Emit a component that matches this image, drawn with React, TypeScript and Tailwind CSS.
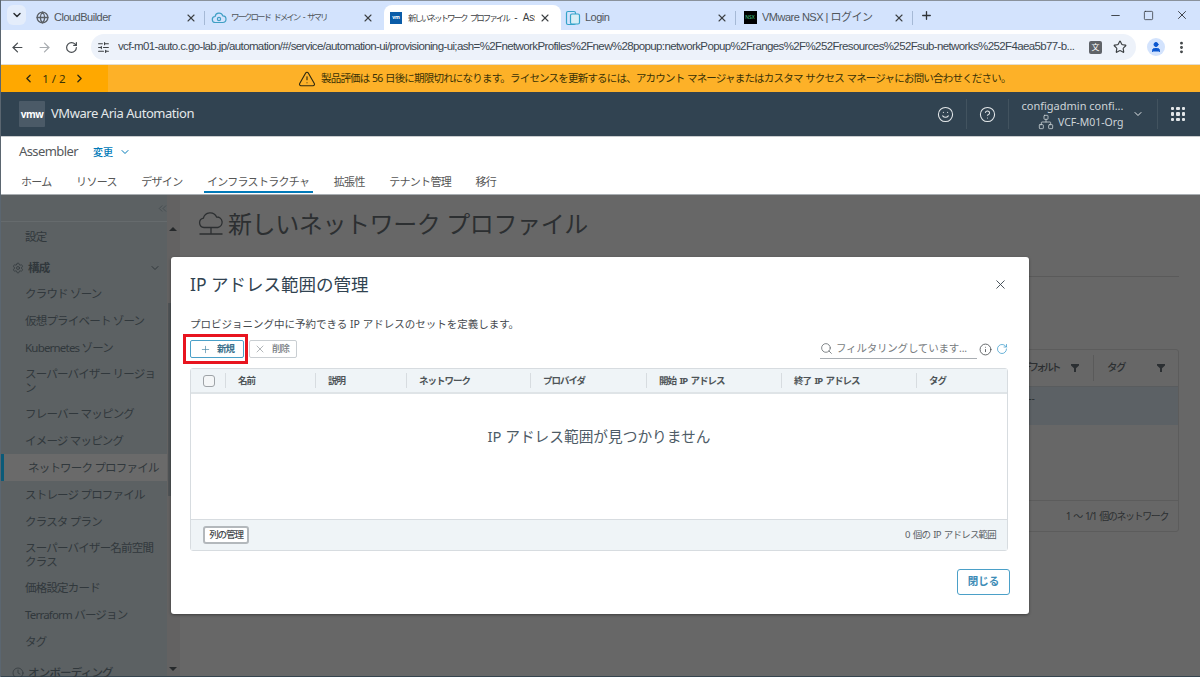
import {
  ArrowLeft, ArrowRight, ChevronDown, ChevronLeft, ChevronRight, ChevronsLeft, CircleHelp, Clock, EllipsisVertical,
  Globe, Info, Minus, Network, Plus, RotateCw, Search, Settings, SlidersHorizontal, Smile, Square, Star, TriangleAlert, User, X,
} from 'lucide-react';

const font = 'font-["Noto_Sans","Noto_Sans_CJK_JP",sans-serif]';

function CloudFav() {
  return (
    <svg width="16" height="16" viewBox="0 0 16 16" fill="none" stroke="#3f9fc4" strokeWidth="1.2">
      <path d="M4.5 12.5a3 3 0 0 1-.4-6A4 4 0 0 1 11.8 5.800a3.300 3.300 0 0 1-.3 6.700z" />
      <circle cx="8" cy="9" r="1.600" />
    </svg>
  );
}

function LoginFav() {
  return (
    <svg width="16" height="16" viewBox="0 0 16 16" fill="none" stroke="#35a3c9" strokeWidth="1.2">
      <rect x="1.500" y="1.500" width="9" height="13" rx="1.500" />
      <rect x="5.500" y="4" width="9" height="10" rx="1.500" fill="#d7eef6" />
    </svg>
  );
}

function CloudNet() {
  return (
    <svg width="26" height="24" viewBox="0 0 26 24" fill="none" stroke="#2c2f31" strokeWidth="1.300" className="shrink-0">
      <path d="M6 15.500a4.700 4.700 0 0 1-.6-9.300A7 7 0 0 1 18.600 5a5.300 5.300 0 0 1 1.200 10.500z" />
      <path d="M13 15.500v6M1.500 22h23" />
    </svg>
  );
}

function Tab({ icon, title, active, sep, cjk }: { icon: React.ReactNode; title: React.ReactNode; active?: boolean; sep?: boolean; cjk?: boolean }) {
  return (
    <div className={`relative flex h-[25px] w-[177px] shrink-0 items-center pl-[3px] pr-[10px] ${active ? 'rounded-t-[8px] bg-white' : ''}`}>
      <span className="flex w-[16px] shrink-0 items-center justify-center ml-[1px]">{icon}</span>
      <span
        className={`ml-[4px] flex-1 overflow-hidden whitespace-pre font-["Liberation_Sans","Noto_Sans_CJK_JP",sans-serif] ${
          cjk ? 'text-[8.500px] tracking-[-2px] [word-spacing:3px]' : 'text-[11px] tracking-[-0.500px]'
        } ${active ? 'text-[#3c4043]' : 'text-[#50565c]'}`}
      >
        {title}
      </span>
      <X size={12} strokeWidth={2.2} className="ml-1 shrink-0 text-[#3c4043]" />
      {sep && <span className="absolute right-[2px] top-[6px] h-[14px] w-px bg-[#a5b9d6]" />}
    </div>
  );
}

const sideItems = [
  { t: 'クラウド ゾーン' },
  { t: '仮想プライベート ゾーン' },
  { t: 'Kubernetes ゾーン' },
  { t: 'スーパーバイザー リージョン', two: true },
  { t: 'フレーバー マッピング' },
  { t: 'イメージ マッピング' },
  { t: 'ネットワーク プロファイル', active: true },
  { t: 'ストレージ プロファイル' },
  { t: 'クラスタ プラン' },
  { t: 'スーパーバイザー名前空間クラス', two: true },
  { t: '価格設定カード' },
  { t: 'Terraform バージョン' },
  { t: 'タグ' },
];

const navTabs = ['ホーム', 'リソース', 'デザイン', 'インフラストラクチャ', '拡張性', 'テナント管理', '移行'];
const columns = ['名前', '説明', 'ネットワーク', 'プロバイダ', '開始 IP アドレス', '終了 IP アドレス', 'タグ'];

function Funnel() {
  return (
    <svg width="8" height="8" viewBox="0 0 8 8" fill="#2b2f32">
      <path d="M0 0h8v1.500L5 4.200V8H3V4.200L0 1.500z" />
    </svg>
  );
}

function AppsDots() {
  return (
    <div className="grid grid-cols-3 gap-[2px]">
      {Array.from({ length: 9 }).map((_, i) => (
        <span key={i} className="h-[3.500px] w-[3.500px] rounded-[1px] bg-[#e3e7ea]" />
      ))}
    </div>
  );
}

export default function App() {
  return (
    <div className={`${font} flex h-[677px] w-[1200px] flex-col overflow-hidden border-l border-[#5b6670] bg-white`}>
      {/* tab strip */}
      <div className="flex h-[30px] shrink-0 items-end border-t border-[#8a929c] bg-[#d3e3fd]">
        <div className="mb-[5px] ml-[6px] flex h-[20px] w-[19px] items-center justify-center rounded-[6px] bg-[#e4edfb]">
          <ChevronDown size={12} strokeWidth={3} className="text-[#2b2f33]" />
        </div>
        <div className="ml-[4px] flex">
          <Tab icon={<Globe size={13} strokeWidth={2.4} className="text-[#5b6066]" />} title="CloudBuilder" sep />
          <Tab icon={<CloudFav />} title="ワークロード ドメイン - サマリ" cjk />
          <Tab
            active
            cjk
            icon={<span className="flex h-[12px] w-[12px] items-center justify-center bg-[#0a5ca8] text-[5px] font-bold text-white">vm</span>}
            title={
              <>
                新しいネットワーク プロファイル<span className="text-[10px] tracking-[-0.3px]"> - Assembler</span>
              </>
            }
          />
          <Tab icon={<LoginFav />} title="Login" sep />
          <Tab
            icon={<span className="flex h-[13px] w-[13px] items-center justify-center bg-black text-[5px] text-[#45d08a]">NSX</span>}
            title="VMware NSX | ログイン"
            sep
          />
        </div>
        <Plus size={13} strokeWidth={2.4} className="mb-[8px] ml-[5px] text-[#2f3337]" />
        <div className="mb-[8px] ml-auto flex items-center gap-[21px] pr-[11px] text-[#2b2f33]">
          <Minus size={13} strokeWidth={1.600} />
          <Square size={11} strokeWidth={1.600} />
          <X size={14} strokeWidth={1.500} />
        </div>
      </div>

      {/* address bar */}
      <div className="flex h-[35px] shrink-0 items-center border-b border-[#e3ddd0] bg-white pl-[9px] pr-[11px]">
        <ArrowLeft size={15} className="text-[#474c50]" />
        <ArrowRight size={15} className="ml-[12px] text-[#a9adb1]" />
        <RotateCw size={13} strokeWidth={2.2} className="ml-[13px] text-[#474c50]" />
        <div className="ml-[13px] flex h-[26px] w-[1046px] items-center rounded-full bg-[#edf2fa] pl-[6px] pr-[9px]">
          <SlidersHorizontal size={13} className="shrink-0 text-[#3c4043]" />
          <span className='ml-[8px] flex-1 overflow-hidden whitespace-nowrap font-["Liberation_Sans",sans-serif] text-[11.500px] tracking-[-0.620px] text-[#3c4750]'>
            vcf-m01-auto.c.go-lab.jp/automation/#/service/automation-ui/provisioning-ui;ash=%2FnetworkProfiles%2Fnew%28popup:networkPopup%2Franges%2F%252Fresources%252Fsub-networks%252F4aea5b77-b...
          </span>
          <span className="ml-[10px] flex h-[13px] w-[13px] shrink-0 items-center justify-center rounded-[2px] bg-[#5f6368] text-[8px] text-white">文</span>
          <Star size={14} strokeWidth={2} className="ml-[11px] shrink-0 text-[#3c4043]" />
        </div>
        <span className="ml-[11px] flex h-[18px] w-[18px] items-center justify-center rounded-full bg-[#d3e3fd]">
          <User size={12} fill="#0b57d0" className="text-[#0b57d0]" />
        </span>
        <EllipsisVertical size={15} strokeWidth={2.6} className="ml-[9px] text-[#3c4043]" />
      </div>

      {/* license banner */}
      <div className="flex h-[27px] shrink-0 items-center bg-[#fdb128] text-[#3a3206]">
        <div className="flex h-full w-[107px] shrink-0 items-center bg-[#ffa800] pl-[21px]">
          <ChevronLeft size={13} strokeWidth={2.4} className="text-[#2f2a10]" />
          <span className="ml-[2px] w-[34px] whitespace-nowrap text-center text-[11.500px]">1 / 2</span>
          <ChevronRight size={13} strokeWidth={2.4} className="ml-[2px] text-[#2f2a10]" />
        </div>
        <div className="ml-[190px] flex items-center">
          <TriangleAlert size={18} strokeWidth={1.500} className="text-[#2f2a10]" />
          <span className="ml-[5px] whitespace-nowrap text-[10.500px] tracking-[-0.800px] [word-spacing:0.6px]">製品評価は 56 日後に期限切れになります。ライセンスを更新するには、アカウント マネージャまたはカスタマ サクセス マネージャにお問い合わせください。</span>
        </div>
      </div>

      {/* app header */}
      <div className="flex h-[45px] shrink-0 items-center border-b border-[#c9ccce] bg-[#314351] pl-[18px] text-[#e4e8ea]">
        <div className="flex h-[26px] w-[26px] items-center justify-center rounded-[1px] bg-[#4b5a67] text-[10px] font-bold tracking-[-0.5px] text-white">vmw</div>
        <span className="ml-[6px] whitespace-nowrap text-[13px] tracking-[-0.450px]">VMware Aria Automation</span>
        <div className="ml-auto flex h-full items-center">
          <Smile size={17} strokeWidth={1.500} />
          <span className="ml-[12px] h-[30px] w-px bg-[#42535f]" />
          <CircleHelp size={17} strokeWidth={1.500} className="ml-[12px]" />
          <span className="ml-[12px] h-[30px] w-px bg-[#42535f]" />
          <div className="ml-[12px] flex w-[103px] flex-col items-end text-[#cdd4d8]">
            <span className="whitespace-nowrap text-[11px] leading-[16px]">configadmin confi...</span>
            <span className="flex items-center whitespace-nowrap text-[10.500px] leading-[16px]">
              <Network size={16} strokeWidth={1.200} className="mr-[4px]" />
              VCF-M01-Org
            </span>
          </div>
          <ChevronDown size={12} className="ml-[8px]" />
          <span className="ml-[13px] h-[30px] w-px bg-[#42535f]" />
          <span className="ml-[13px] mr-[15px]"><AppsDots /></span>
        </div>
      </div>

      {/* product nav */}
      <div className="flex h-[58px] shrink-0 flex-col border-b border-[#a9aeb2] bg-white pl-[18px]">
        <div className="mt-[6px] flex h-[18px] items-center">
          <span className="text-[13px] tracking-[-0.600px] text-[#55595c]">Assembler</span>
          <span className="ml-[15px] text-[10px] font-medium text-[#0079b8]">変更</span>
          <ChevronDown size={12} strokeWidth={2} className="ml-[6px] text-[#0079b8]" />
        </div>
        <div className="mt-[11px] flex gap-[24.500px] pl-[2px]">
          {navTabs.map((t) => (
            <span
              key={t}
              className={`relative whitespace-nowrap text-[11px] leading-[20px] tracking-[-0.700px] text-[#565656] ${
                t === 'インフラストラクチャ' ? 'after:absolute after:-left-[3px] after:-right-[4px] after:top-[19px] after:h-[2px] after:bg-[#0079b8]' : ''
              }`}
            >
              {t}
            </span>
          ))}
        </div>
      </div>

      {/* main area, dimmed by the overlay */}
      <div className="relative flex min-h-0 flex-1 border-b border-[#36454f] bg-[#676767]">
        <aside className="flex w-[166px] shrink-0 flex-col bg-[#5c6163] text-[11.500px] tracking-[-0.800px] text-[#31383c]">
          <div className="flex h-[27px] shrink-0 items-center justify-end border-b border-[#666b6d]">
            <ChevronsLeft size={13} strokeWidth={1.200} className="-mr-[2px] text-[#3d4448]" />
          </div>
          <div className="flex h-[30px] shrink-0 items-center pl-[24px]">設定</div>
          <div className="mt-[3px] flex h-[26px] shrink-0 items-center pl-[11px] font-bold">
            <Settings size={12} strokeWidth={1.500} />
            <span className="ml-[4px]">構成</span>
            <ChevronDown size={12} strokeWidth={2} className="ml-auto mr-[6px]" />
          </div>
          <div className="-mt-[1px] flex flex-col">
            {sideItems.map((s) => (
              <div
                key={s.t}
                className={`flex shrink-0 items-center pl-[24px] pr-[10px] leading-[14px] ${s.two ? 'h-[39px]' : 'h-[27px] whitespace-nowrap'} ${
                  s.active ? 'border-l-[3px] border-[#0b5a78] bg-[#6a6a6a] pl-[21px]' : ''
                }`}
              >
                {s.t}
              </div>
            ))}
          </div>
          <div className="mt-[9px] flex items-center pl-[11px] font-medium">
            <Clock size={12} strokeWidth={1.500} />
            <span className="ml-[4px] whitespace-nowrap">オンボーディング</span>
          </div>
        </aside>
        <div className="flex w-[13px] shrink-0 bg-[#636262] pl-[1px]">
          <span className="mt-[108px] h-[193px] w-[3px] bg-[#4f5356]" />
          <div className="-ml-[2px] flex w-[7px] flex-col items-center justify-between pb-[5px] pt-[32px]">
            <span className="h-0 w-0 border-x-[4px] border-b-[4px] border-x-transparent border-b-[#26292b]" />
            <span className="h-0 w-0 border-x-[4px] border-t-[4px] border-x-transparent border-t-[#26292b]" />
          </div>
        </div>

        <div className="flex min-w-0 flex-1 flex-col pl-[18px] pr-[21px] text-[#2c2f31]">
          <div className="mt-[16px] flex h-[26px] items-center">
            <CloudNet />
            <span className="ml-[4px] whitespace-nowrap text-[24px] tracking-[-0.400px]">新しいネットワーク プロファイル</span>
          </div>
          <div className="mt-[39px] h-px w-full bg-[#5a5a5a]" />
          <div className="mt-[72px] flex h-[183px] w-full flex-col rounded-[3px] border border-[#5c5c5c] text-[10.500px]">
            <div className="flex h-[37px] shrink-0 items-center justify-end border-b border-[#595c5e]">
              <span className="flex h-[26px] w-[84px] items-center border-r border-[#5a5a5a] pl-[11px] pr-[14px]">
                <span className="flex-1 whitespace-nowrap font-medium tracking-[-3px]">デフォルト</span>
                <Funnel />
              </span>
              <span className="flex w-[84px] items-center pl-[13px] pr-[13px]">
                <span className="flex-1 font-medium tracking-[-1.500px]">タグ</span>
                <Funnel />
              </span>
            </div>
            <div className="flex h-[38px] shrink-0 items-start justify-end bg-[#5c6165] pr-[143px] pt-[4px]">---</div>
            <div className="flex-1 border-b border-[#5c5c5c]" />
            <div className="flex h-[30px] shrink-0 items-center justify-end whitespace-nowrap pr-[10px] text-[10px] tracking-[-1.400px] [word-spacing:2px]">1 ～ 1/1 個のネットワーク</div>
          </div>
        </div>

        {/* modal overlay */}
        <div className="absolute inset-0 flex items-start pl-[170px] pt-[62px]">
          <div className="flex h-[357px] w-[858px] flex-col rounded-[3px] bg-white pl-[19px] pr-[21px] text-[#454a4e] shadow-[0_1px_3px_rgba(0,0,0,0.4)]">
            <div className="mt-[15px] flex h-[24px] items-center justify-between">
              <span className="whitespace-nowrap text-[17.500px] text-[#314351]">IP アドレス範囲の管理</span>
              <X size={15} strokeWidth={1.500} className="text-[#3f4a52]" />
            </div>
            <p className="mt-[20px] text-[10.500px] leading-[16px]">プロビジョニング中に予約できる IP アドレスのセットを定義します。</p>
            <div className="mt-[8px] flex h-[18px] items-center">
              <div className="relative">
                <button className="flex h-[18px] w-[54px] items-center rounded-[2px] border border-[#4ba0c8] pl-[9px] text-[9.500px] font-bold tracking-[-1px] text-[#3b6f8b]">
                  <Plus size={11} strokeWidth={1.500} className="text-[#4a87a6]" />
                  <span className="ml-[6px]">新規</span>
                </button>
                <span className="absolute -bottom-[6px] -left-[7px] -right-[4px] -top-[6px] border-[3px] border-[#e8141f]" />
              </div>
              <button className="ml-[5px] flex h-[18px] w-[48px] items-center rounded-[2px] border border-[#c9ced2] pl-[4px] text-[9.500px] font-medium tracking-[-1px] text-[#777d82]">
                <X size={12} strokeWidth={1.300} className="text-[#8a9095]" />
                <span className="ml-[6px]">削除</span>
              </button>
              <div className="ml-auto flex items-center">
                <div className="flex h-[19px] w-[157px] items-center border-b border-[#a9aeb3]">
                  <Search size={13} strokeWidth={1.500} className="text-[#666c70]" />
                  <span className="ml-[3px] whitespace-nowrap text-[10.500px] tracking-[-0.200px] text-[#777c80]">フィルタリングしています...</span>
                </div>
                <Info size={13} strokeWidth={1.500} className="ml-[2px] text-[#454a4e]" />
                <RotateCw size={12} strokeWidth={1.500} className="ml-[4px] text-[#3d9ccc]" />
              </div>
            </div>
            <div className="mt-[10px] flex h-[183px] flex-col rounded-[3px] border border-[#d7dce0]">
              <div className="grid h-[25px] shrink-0 grid-cols-[35px_90px_91px_124px_116px_135px_135px_1fr] items-center border-b-2 border-[#dfe4e7] bg-[#eff4f7] text-[9.500px] font-bold tracking-[-1px] text-[#4e5458] [word-spacing:2px]">
                <span className="flex h-[15px] items-center border-r border-[#d7dce0] pl-[12px]">
                  <span className="h-[12px] w-[12px] rounded-[3px] border border-[#9ea3a7] bg-[#f4f6f7]" />
                </span>
                {columns.map((c, i) => (
                  <span key={c} className={`h-[15px] whitespace-pre pl-[12px] leading-[15px] ${i < columns.length - 1 ? 'border-r border-[#d7dce0]' : ''}`}>{c}</span>
                ))}
              </div>
              <div className="flex flex-1 justify-center pt-[31px] text-[14.700px] text-[#4d5b66]">IP アドレス範囲が見つかりません</div>
              <div className="flex h-[31px] shrink-0 items-center justify-between border-t border-[#d7dce0] bg-[#eff4f7] pl-[12px] pr-[11px]">
                <button className="h-[18px] w-[46px] rounded-[3px] border-2 border-[#b3b8bc] bg-white text-[9.500px] font-medium leading-none tracking-[-1.100px] text-[#43484c]">列の管理</button>
                <span className="text-[9.500px] tracking-[-0.800px] text-[#5b6165] [word-spacing:1.500px]">0 個の IP アドレス範囲</span>
              </div>
            </div>
            <div className="mt-[18px] flex justify-end">
              <button className="-mr-[2px] h-[26px] w-[53px] rounded-[3px] border border-[#4ba0c8] text-[10.500px] font-bold text-[#3d8cb6]">閉じる</button>
            </div>
          </div>
        </div>
      </div>
    </div>
  );
}
